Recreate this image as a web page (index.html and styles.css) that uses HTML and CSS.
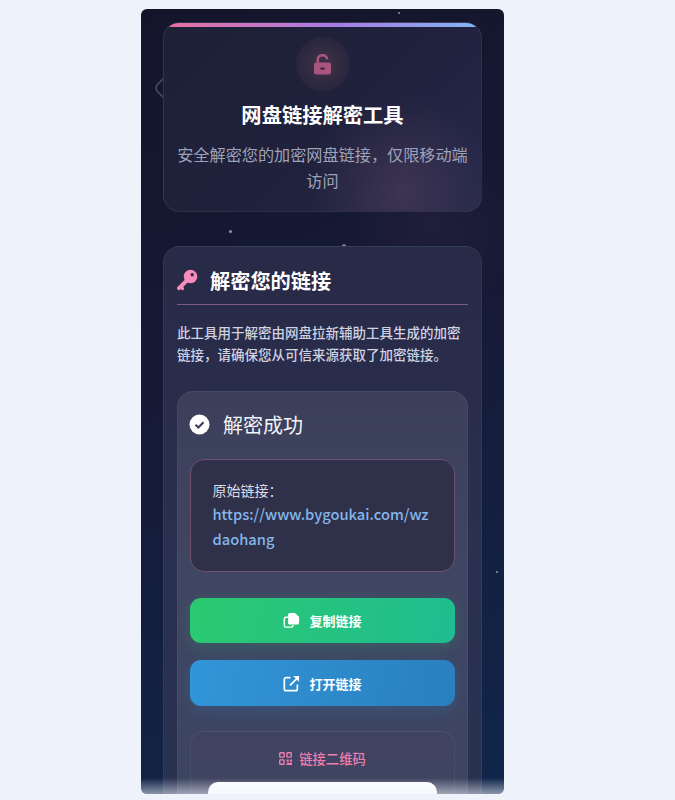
FILE: index.html
```html
<!DOCTYPE html>
<html lang="zh-CN">
<head>
<meta charset="utf-8">
<title>网盘链接解密工具</title>
<link rel="stylesheet" href="styles.css">
</head>
<body>
<main class="phone">
  <span class="star s1"></span><span class="star s2"></span><span class="star s3"></span><span class="star s4"></span>
  <svg class="deco" viewBox="0 0 12 26" width="12" height="26"><path d="M11 1 L2 10 Q0 13 2 16 L11 25" fill="none" stroke="#4a4e68" stroke-width="1.5"/></svg>
  <header class="hero">
    <div class="hero-bar"></div>
    <div class="hero-icon">
      <svg viewBox="0 0 20 22" width="19" height="21"><path d="M5 10V6.2a5 5 0 0 1 9.7-1.7" fill="none" stroke="#a9557f" stroke-width="2.6" stroke-linecap="round"/><rect x="1" y="9" width="18" height="12.6" rx="2.4" fill="#a9557f"/><rect x="7.6" y="14.2" width="4.8" height="2.2" rx="1" fill="#3a2c44"/></svg>
    </div>
    <h1>网盘链接解密工具</h1>
    <p>安全解密您的加密网盘链接，仅限移动端访问</p>
  </header>

  <section class="card">
    <div class="card-head">
      <svg class="key" viewBox="0 0 22 22" width="22" height="22"><circle cx="14.5" cy="7.5" r="6.8" fill="#f98bbb"/><path d="M10 9.5 1.2 18.3a1.2 1.2 0 0 0 0 1.6l1 1c.5.5 1.1.5 1.6 0l.9-.9 1.3 1c.4.3.9.2 1.2-.1l.7-.8a1 1 0 0 0 0-1.3l-.7-.9 5.4-5.4z" fill="#f98bbb"/><circle cx="16.2" cy="5.8" r="1.7" fill="#2a2c4a"/></svg>
      <h2>解密您的链接</h2>
    </div>
    <p class="intro">此工具用于解密由网盘拉新辅助工具生成的加密链接，请确保您从可信来源获取了加密链接。</p>

    <div class="result">
      <div class="result-head">
        <svg viewBox="0 0 22 22" width="21" height="21"><circle cx="11" cy="11" r="10.5" fill="#fff"/><path d="M6.8 11.2l3 3 5.4-5.6" fill="none" stroke="#3a3e58" stroke-width="2.2"/></svg>
        <h3>解密成功</h3>
      </div>
      <div class="link-box">
        <div class="link-label">原始链接：</div>
        <div class="link-url">https://www.bygoukai.com/wzdaohang</div>
      </div>
      <button class="btn btn-green">
        <svg viewBox="0 0 18 18" width="17" height="17"><path d="M5.5 5.5H3a1.6 1.6 0 0 0-1.6 1.6v7.3A1.6 1.6 0 0 0 3 16h6a1.6 1.6 0 0 0 1.6-1.6v-.6" fill="none" stroke="#fff" stroke-width="1.5"/><path d="M7 1h5.5L17 5v6.6a1.6 1.6 0 0 1-1.6 1.6H7A1.6 1.6 0 0 1 5.4 11.6V2.6A1.6 1.6 0 0 1 7 1z" fill="#fff"/></svg>
        <span>复制链接</span>
      </button>
      <button class="btn btn-blue">
        <svg viewBox="0 0 18 18" width="17" height="17"><path d="M8 2.8H3.2A1.8 1.8 0 0 0 1.4 4.6v10.2a1.8 1.8 0 0 0 1.8 1.8h10.2a1.8 1.8 0 0 0 1.8-1.8V10" fill="none" stroke="#fff" stroke-width="1.8"/><path d="M7.4 11 15.4 3" fill="none" stroke="#fff" stroke-width="2"/><path d="M10.8 1h6.2v6.2z" fill="#fff"/></svg>
        <span>打开链接</span>
      </button>
      <div class="qr">
        <div class="qr-title">
          <svg viewBox="0 0 12 12" width="13" height="13"><g fill="none" stroke="#f07cb0" stroke-width="1.3"><rect x=".7" y=".7" width="4" height="4" rx=".5"/><rect x="7.3" y=".7" width="4" height="4" rx=".5"/><rect x=".7" y="7.3" width="4" height="4" rx=".5"/></g><path d="M7 7h2v2H7zM10 7h2v2h-2zM7 10h5v2H7z" fill="#f07cb0"/></svg>
          <span>链接二维码</span>
        </div>
        <div class="qr-code"></div>
      </div>
    </div>
  </section>
  <div class="fade"></div>
</main>
</body>
</html>
```

FILE: styles.css
```css
* { box-sizing: border-box; }
html, body { height: 100%; margin: 0; overflow: hidden; }
body {
  background: #edf2fb;
  font-family: "Noto Sans CJK SC", "Noto Sans", sans-serif;
  padding-top: 9px;
}
.phone {
  position: relative;
  width: 363px;
  height: 785px;
  margin-left: 141px;
  padding: 13px 22px 0;
  border-radius: 6px;
  overflow: hidden;
  background:
    radial-gradient(circle at 290px 215px, rgba(110,65,105,.12), transparent 90px),
    linear-gradient(160deg, #14152b 0%, #161a36 45%, #10264c 100%);
}
.star { position: absolute; border-radius: 50%; background: #8f94aa; }
.s1 { left: 257px; top: 3px; width: 2px; height: 2px; }
.s2 { left: 88px; top: 221px; width: 3px; height: 3px; }
.s3 { left: 201px; top: 235px; width: 4px; height: 4px; background: #7c7892; }
.s4 { left: 355px; top: 562px; width: 2px; height: 2px; }
.deco { position: absolute; left: 14px; top: 66px; }
.hero {
  position: relative;
  z-index: 1;
  height: 190px;
  padding: 0 12px;
  border-radius: 16px;
  overflow: hidden;
  text-align: center;
  border: 1px solid rgba(255,255,255,.07);
  background:
    radial-gradient(circle at 240px 168px, rgba(125,85,115,.3), transparent 95px),
    linear-gradient(135deg, #1e2036, #20223e 60%, #24284a);
}
.hero-bar {
  height: 4px;
  margin: 0 -12px;
  background: linear-gradient(90deg, #e8709c, #a87be8 55%, #7fb8f2);
}
.hero-icon {
  display: flex;
  align-items: center;
  justify-content: center;
  width: 54px;
  height: 54px;
  margin: 10px auto 0;
  border-radius: 50%;
  background: radial-gradient(circle, #3a2f44 25%, rgba(58,47,68,.45) 60%, rgba(58,47,68,0) 100%);
}
.hero h1 {
  margin: 8px 0 0;
  font-size: 20.3px;
  line-height: 30px;
  font-weight: 700;
  color: #fff;
}
.hero p {
  margin: 12px 0 0;
  font-size: 16.15px;
  line-height: 26px;
  color: #9ea1b8;
}
.card {
  position: relative;
  z-index: 1;
  height: 700px;
  margin-top: 34px;
  padding: 14px 13px;
  border-radius: 16px;
  border: 1px solid rgba(255,255,255,.05);
  background: linear-gradient(180deg, #282a47, #2a304f 45%, #283352);
}
.card-head {
  display: flex;
  align-items: center;
  gap: 12px;
  height: 44px;
  border-bottom: 1.5px solid #7e5a85;
  padding-bottom: 4px;
}
.key { flex: none; margin-top: -1px; margin-left: -1px; }
.card-head h2 {
  margin: 0;
  font-size: 20.2px;
  line-height: 28px;
  font-weight: 700;
  color: #fff;
}
.intro {
  margin: 16px 0 0;
  font-size: 13.5px;
  line-height: 22px;
  color: #d0d2e2;
  font-weight: 500;
}
.result {
  height: 500px;
  margin-top: 26px;
  padding: 11px 12px 0;
  border-radius: 16px;
  border: 1px solid rgba(255,255,255,.05);
  background: linear-gradient(180deg, #3b3f5a, #404663 40%, #3a445f);
}
.result-head {
  display: flex;
  align-items: center;
  gap: 13px;
  height: 42px;
  margin-left: -1px;
}
.result-head h3 {
  margin: 0;
  font-size: 20px;
  font-weight: 400;
  color: #f2f3f8;
}
.link-box {
  height: 113px;
  margin-top: 14px;
  padding: 19px 20px 0 21.5px;
  border: 1.5px solid #74506f;
  border-radius: 14px;
  background: #2f3049;
}
.link-label {
  font-size: 14px;
  line-height: 22px;
  color: #dcdce6;
}
.link-url {
  font-size: 14.7px;
  line-height: 25px;
  font-weight: 500;
  color: #84b6ea;
  word-break: break-all;
}
.btn {
  display: flex;
  align-items: center;
  justify-content: center;
  gap: 9px;
  width: 100%;
  border: 0;
  border-radius: 11px;
  font: 700 13px "Noto Sans CJK SC", sans-serif;
  color: #fff;
}
.btn-green {
  height: 45px;
  margin-top: 26px;
  background: linear-gradient(100deg, #2bc970, #1fbd90);
  box-shadow: 0 4px 16px rgba(46,204,113,.2);
}
.btn-blue {
  height: 46px;
  margin-top: 17px;
  background: linear-gradient(100deg, #3196d8, #2a7fbf);
  box-shadow: 0 4px 16px rgba(52,152,219,.2);
}
.qr {
  height: 200px;
  margin-top: 25px;
  padding: 0 17px;
  border-radius: 14px;
  border: 1px solid rgba(255,255,255,.06);
  background: linear-gradient(180deg, #3f435f, #414866);
}
.qr-title {
  display: flex;
  align-items: center;
  justify-content: center;
  gap: 7px;
  height: 47px;
  margin-top: 3px;
  font-size: 13.3px;
  font-weight: 500;
  color: #f07cb0;
}
.qr-code {
  height: 120px;
  border-radius: 10px;
  background: #fff;
}
.fade {
  position: absolute;
  z-index: 2;
  left: 0;
  right: 0;
  bottom: 0;
  height: 16px;
  background: linear-gradient(180deg, rgba(237,242,251,0), rgba(237,242,251,.55));
}
```
